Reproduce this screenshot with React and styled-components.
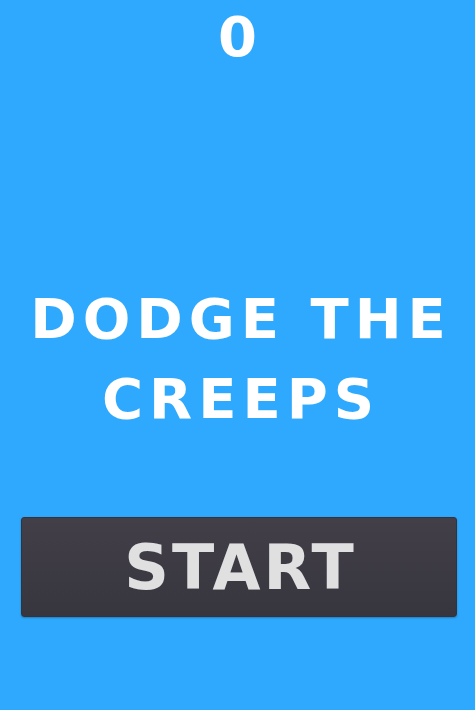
import styled, { createGlobalStyle } from "styled-components"

const GlobalStyle = createGlobalStyle`
  html, body {
    margin: 0;
    padding: 0;
    background: #2ea9fe;
  }
`

const App = () => {
  return (
    <Screen>
      <GlobalStyle />
      <Score>0</Score>
      <Message>
        DODGE THE
        <br />
        CREEPS
      </Message>
      <StartButton>START</StartButton>
    </Screen>
  )
}
export default App

const Screen = styled.div`
  width: 475px;
  height: 710px;
  background: #2ea9fe;
  display: flex;
  flex-direction: column;
  align-items: center;
  font-family: "DejaVu Sans", sans-serif;
  font-weight: 700;
  overflow: hidden;
`

const Score = styled.div`
  margin-top: 4px;
  font-size: 56px;
  line-height: 66px;
  color: #ffffff;
`

const Message = styled.div`
  margin-top: 209px;
  padding-left: 7px;
  font-size: 56px;
  line-height: 80px;
  color: #ffffff;
  text-align: center;
  letter-spacing: 6px;
`

const StartButton = styled.button`
  margin-top: 78px;
  margin-left: 3px;
  width: 436px;
  height: 100px;
  border: 1px solid #34323a;
  border-radius: 3px;
  background: linear-gradient(#423f49, #37353e);
  box-shadow: 0 1px 2px rgba(0, 0, 0, 0.25);
  color: #e0e0e0;
  font-family: "DejaVu Sans", sans-serif;
  font-weight: 700;
  font-size: 62px;
  letter-spacing: 3px;
  display: flex;
  justify-content: center;
  align-items: center;
  padding: 0 0 0 3px;
`
